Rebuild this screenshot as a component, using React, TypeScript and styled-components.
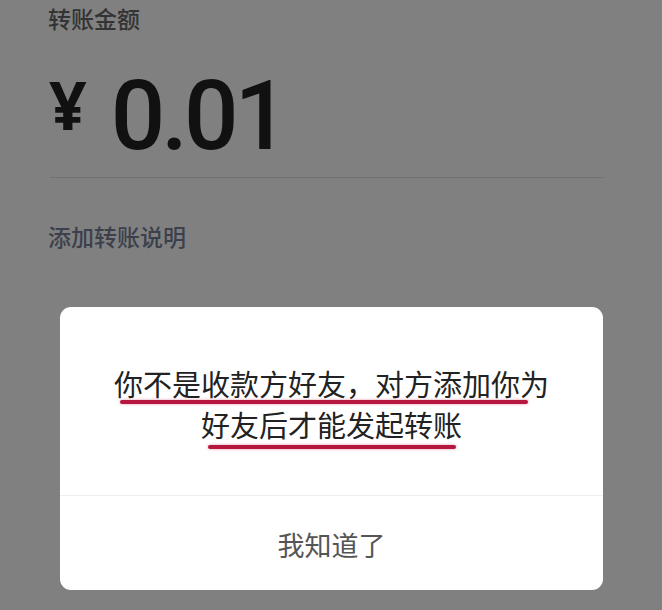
import { createGlobalStyle, styled } from 'styled-components';

const GlobalStyle = createGlobalStyle`
    html, body {
        margin: 0;
        padding: 0;
        background: #808080;
    }
    body {
        font-family: "Noto Sans CJK SC", "Noto Sans", sans-serif;
        overflow: hidden;
    }
`;

const Page = styled.div`
    display: flex;
    flex-direction: column;
    width: 662px;
    height: 610px;
    padding: 0 58px 0 48px;
    box-sizing: border-box;
`;

const Label = styled.div<{ $tone: string; $top: number }>`
    font-size: 23px;
    font-weight: 500;
    line-height: 32px;
    height: 32px;
    color: ${(props) => props.$tone};
    margin-top: ${(props) => props.$top}px;
`;

const AmountRow = styled.div`
    display: flex;
    align-items: flex-start;
    margin-top: 37px;
    height: 96px;
    padding-left: 1px;
`;

const Currency = styled.span`
    font-family: "Noto Sans", "Roboto", sans-serif;
    font-size: 66px;
    line-height: 66px;
    font-weight: 700;
    color: #111;
    margin: 0 24px 0 0;
`;

const Digits = styled.span`
    font-family: "Roboto", "Noto Sans", sans-serif;
    font-size: 96px;
    line-height: 96px;
    font-weight: 500;
    color: #111;
    letter-spacing: -4px;
    margin-top: -3px;
`;

const Rule = styled.div`
    height: 1px;
    background: #727272;
    margin: 10px 0 0 2px;
`;

const Dialog = styled.div`
    margin: 55px 0 0 12px;
    width: 543px;
    height: 283px;
    background: #fff;
    border-radius: 11px;
    display: flex;
    flex-direction: column;
    overflow: hidden;
`;

const Body = styled.div`
    height: 189px;
    display: flex;
    flex-direction: column;
    padding-top: 59px;
    box-sizing: border-box;
    border-bottom: 1px solid #efefef;
`;

const Line = styled.div`
    font-size: 29px;
    line-height: 34px;
    color: #222;
    text-align: center;
    white-space: nowrap;
`;

const Stroke = styled.div<{ $left: number; $width: number; $gap: number }>`
    height: 4px;
    border-radius: 2px;
    background: #b5173f;
    box-shadow: 0 0 3px rgba(181, 23, 63, 0.45);
    width: ${(props) => props.$width}px;
    margin-left: ${(props) => props.$left}px;
    margin-top: ${(props) => props.$gap}px;
    margin-bottom: 3px;
`;

const Footer = styled.div`
    flex: 1;
    display: flex;
    align-items: center;
    justify-content: center;
    font-size: 27px;
    color: #555;
    padding-top: 2px;
`;

export default function App() {
    return (
        <>
            <GlobalStyle />
            <Page>
                <Label $tone="#333" $top={2}>转账金额</Label>
                <AmountRow>
                    <Currency>¥</Currency>
                    <Digits>0.01</Digits>
                </AmountRow>
                <Rule />
                <Label $tone="#3b404c" $top={42}>添加转账说明</Label>
                <Dialog>
                    <Body>
                        <Line>你不是收款方好友，对方添加你为</Line>
                        <Stroke $left={60} $width={408} $gap={0} />
                        <Line>好友后才能发起转账</Line>
                        <Stroke $left={148} $width={248} $gap={4} />
                    </Body>
                    <Footer>我知道了</Footer>
                </Dialog>
            </Page>
        </>
    );
}
